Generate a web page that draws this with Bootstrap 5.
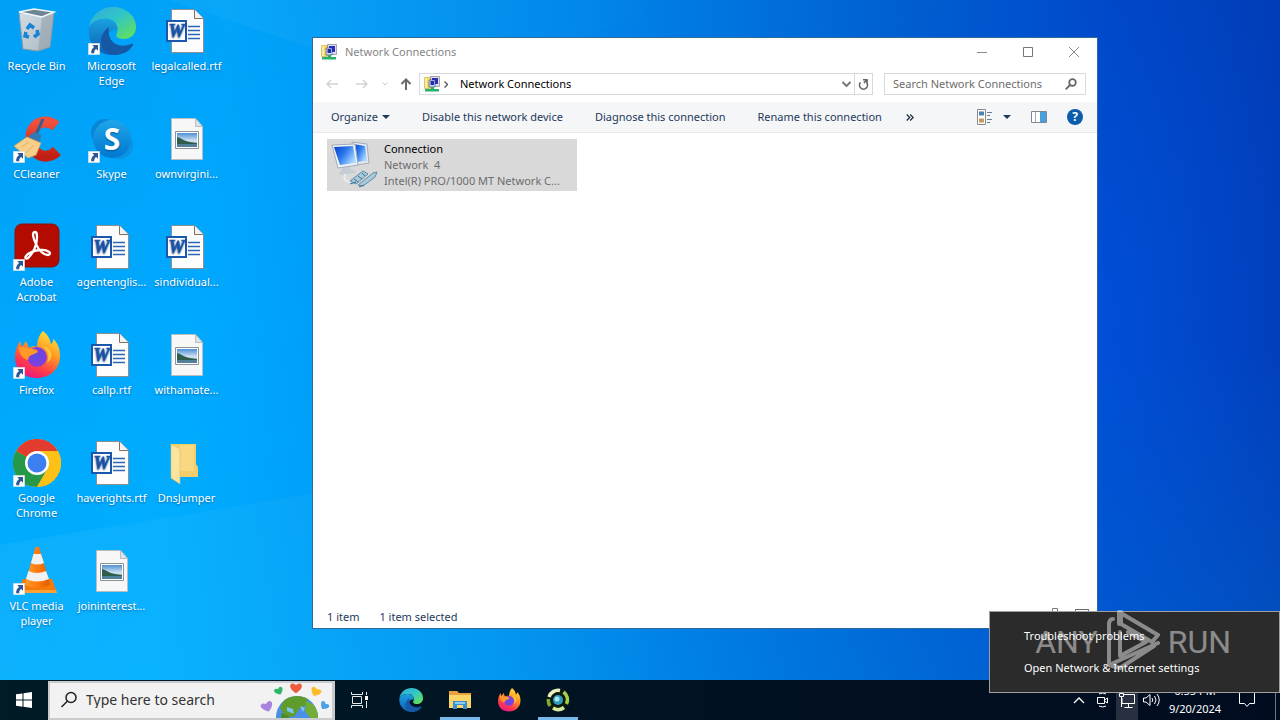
<!DOCTYPE html>
<html lang="en">
<head>
<meta charset="utf-8">
<meta name="viewport" content="width=device-width, initial-scale=1">
<title>Network Connections</title>
<link rel="stylesheet" href="https://cdn.jsdelivr.net/npm/bootstrap@5.3.0/dist/css/bootstrap.min.css">
<style>
body{font-family:"Noto Sans","Open Sans",sans-serif;font-size:11px;line-height:16px;color:#000;background:#0078d7}
button{font:inherit;color:inherit;border:0;background:none;padding:0}
button,a{display:inline-flex;align-items:center;justify-content:center}
svg{display:block;flex:none}
.desk{background:
 radial-gradient(ellipse 260px 420px at 1090px 330px,rgba(0,100,255,.35),transparent),
 linear-gradient(180deg,rgba(0,60,160,.06),transparent 50%,rgba(0,200,255,.18)),
 linear-gradient(97deg,#00a6fb 0%,#00aaff 17%,#008cef 42%,#0065d6 64%,#0046c6 82%,#0238b2 100%)}
.beams{position:absolute;inset:0;width:100%;height:100%}
.icon-grid{display:grid;grid-auto-flow:column;grid-template-rows:repeat(6,108px);grid-auto-columns:75px;position:relative;width:max-content;margin-left:-1px}
.desk-icon{flex-direction:column;justify-content:flex-start;align-items:center;gap:3px;padding-top:7px;color:#fff;text-decoration:none;text-align:center;line-height:15px;white-space:nowrap;text-shadow:0 1px 2px rgba(0,40,90,.5)}
.two-line{white-space:normal;width:62px}
.win{position:absolute;left:312px;right:182px;top:37px;bottom:51px;border:1px solid #2c6a9c;background:#fff}
.titlebar{height:28px;color:#858585}
.cap{width:46px;height:28px}
.navrow{height:36px;padding:0 11px 0 4px}
.w30{width:30px}.w26{width:26px}.w16{width:16px}
.addr,.find{height:22px;border:1px solid #d9d9d9}
.find{width:202px;margin-left:11px}
.find input{font-size:11px;color:#6d6d6d;border:0;outline:0;background:none;min-width:0}
.find input::placeholder,.tb-search input::placeholder{color:inherit;opacity:1}
.refresh{width:18px;border-left:1px solid #d9d9d9}
.tools{height:31px;background:#f5f6f7;border-bottom:1px solid #e9eaeb;color:#1e395b;padding:0 14px 0 18px;gap:32px}
.tools-right{gap:20px}
.view-pair{gap:10px}
.more-cmd{margin-left:-8px}
.conn{width:250px;height:52px;background:#d9d9d9;margin:6px 0 0 14px;color:#6d6d6d;text-align:left;justify-content:flex-start}
.conn-text{margin-left:5px}
.status{height:23px;color:#1e395b;padding:0 8px 0 14px}
.count{margin-right:20px}
.taskbar{height:40px;background:linear-gradient(90deg,#001a26,#021222 55%,#020c20)}
.tb-search{width:287px;height:39px;background:#f2f2f2;border:2px solid #c9cbcc;border-right-width:3px;color:#333}
.tb-search input{font-size:14px;border:0;outline:0;background:none;color:inherit;width:150px}
.task{width:48px;height:40px;margin-right:1px}
.running{position:relative}
.running::after{content:"";position:absolute;left:4px;right:4px;bottom:0;height:3px;background:#76b9ed}
.tray{width:24px;height:40px}
.clock{width:64px;line-height:18px;color:#fff}
.notif{width:40px;height:40px}
.pop{position:absolute;right:0;bottom:27px;width:291px;padding:8px 0;background:#2b2b2b;border:1px solid #a0a0a0;z-index:3}
.pop button{height:32px;padding-left:34px;color:#fff;justify-content:flex-start}
.wm{position:absolute;right:49px;bottom:46px;z-index:4;color:#fff;opacity:.45;pointer-events:none;font:32px/64px Roboto,sans-serif}
</style>
</head>
<body class="vh-100 d-flex flex-column overflow-hidden position-relative">
<svg width="0" height="0" class="position-absolute">
<defs>
<linearGradient id="eg" x1="0" y1="0" x2="1" y2="1"><stop offset="0" stop-color="#35a9d8"/><stop offset=".45" stop-color="#2fc5c9"/><stop offset="1" stop-color="#6be34c"/></linearGradient>
<linearGradient id="eb" x1="0" y1="0" x2="0" y2="1"><stop offset="0" stop-color="#1aa0e0"/><stop offset="1" stop-color="#0b5fb4"/></linearGradient>
<linearGradient id="fx" x1=".8" y1="0" x2=".3" y2="1"><stop offset="0" stop-color="#ffe63d"/><stop offset=".4" stop-color="#ff9a22"/><stop offset=".75" stop-color="#ff3a4a"/><stop offset="1" stop-color="#e8168a"/></linearGradient>
<radialGradient id="fp"><stop offset="0" stop-color="#5b4de8"/><stop offset="1" stop-color="#8a3bd8"/></radialGradient>
<linearGradient id="sk" x1="0" y1="0" x2="0" y2="1"><stop offset="0" stop-color="#1fa5ea"/><stop offset="1" stop-color="#0078d0"/></linearGradient>
<linearGradient id="cc" x1="0" y1="0" x2="0" y2="1"><stop offset="0" stop-color="#f0503c"/><stop offset="1" stop-color="#c21f14"/></linearGradient>
<linearGradient id="vl" x1="0" y1="0" x2="1" y2="0"><stop offset="0" stop-color="#ff9d2e"/><stop offset=".5" stop-color="#ff7a0c"/><stop offset="1" stop-color="#e05c00"/></linearGradient>
<linearGradient id="bn" x1="0" y1="0" x2="1" y2="1"><stop offset="0" stop-color="#d3dde5"/><stop offset="1" stop-color="#a9b6c1"/></linearGradient>
<linearGradient id="sky" x1="0" y1="0" x2="0" y2="1"><stop offset="0" stop-color="#4f8fd6"/><stop offset=".55" stop-color="#cfe4f2"/><stop offset="1" stop-color="#8fb3c8"/></linearGradient>
<linearGradient id="sc" x1="0" y1="0" x2="1" y2=".6"><stop offset="0" stop-color="#0a3bc8"/><stop offset=".5" stop-color="#2a78ee"/><stop offset="1" stop-color="#a8d8ff"/></linearGradient>
<linearGradient id="bm" x1="0" y1="0" x2="1" y2="0"><stop offset="0" stop-color="#fff" stop-opacity=".05"/><stop offset="1" stop-color="#fff" stop-opacity="0"/></linearGradient>
<symbol id="lnk" viewBox="0 0 12 12"><path fill="#fff" stroke="#cfd6dc" stroke-width=".6" d="M.3.3h11.4v11.4H.3z"/><path fill="#2b5797" d="M4.3 2h5.700v5.700L8.200 6C6.600 7 6.200 8.200 6.200 10.300H3.200C2.900 7.500 4 5.400 6.100 3.900z"/></symbol>
<symbol id="edge" viewBox="0 0 48 48"><path fill="url(#eg)" d="M1 20C3 8 13 0 25 0c13 0 23 9 23 20 0 8-6 12-12 12-7 0-9-3-7-6 2-4 0-13-9-14C12 11 4 14 1 20z"/><path fill="url(#eb)" d="M1 20c4-6 11-9 18-8 7 1 11 6 10 11-3-1-10 1-10 9 0 8 6 14 14 15C17 52-2 40 1 20z"/><path fill="#1559a6" d="M21 20c-6 4-10 12-7 20 4 7 12 9 19 7 5-1 9-4 12-9 0-1-1-2-2-1-11 5-25-1-22-17z"/></symbol>
<symbol id="ff" viewBox="0 0 48 48"><path fill="url(#fx)" d="M30 0c5 4 7 8 8 13 2-1 2-3 2-5 5 4 7 10 7 17 0 13-10 22-23 22S2 39 2 26c0-6 2-11 5-16l2 6 4-6 3 7c3-2 6-2 8-1 0-6 2-12 6-16z"/><circle cx="24" cy="26" r="10" fill="url(#fp)"/><path fill="#ff9a28" d="M6 16c6 0 11 2 15 2 4 1 6 3 0 5-4 1-6 3-6 6-5-1-9-6-9-13z"/><path fill="#ffc53a" d="M29 15c6 4 8 9 5 17 8-6 5-15-5-17z"/></symbol>
<symbol id="word" viewBox="3 0 48 48"><path fill="#fdfdfd" stroke="#8d8f92" d="M11.500 2.500h23l9 9v34h-32z"/><path fill="#f2f2f2" stroke="#7d7264" d="M34.500 2.500v9h9"/><path stroke="#2b66b8" stroke-width="1.300" d="M28 19.500h12M28 23.500h12M28 27.500h12M28 31.500h12"/><path fill="#fff" stroke="#1c57ae" stroke-width="2" d="M7 14h19v20H7z"/><text x="16.500" y="30" text-anchor="middle" font-family="Liberation Serif,serif" font-weight="700" font-style="italic" font-size="18" fill="#1c57ae" stroke="#1c57ae" stroke-width=".7">W</text></symbol>
<symbol id="pic" viewBox="0 0 48 48"><path fill="#f7f7f7" stroke="#b9bec2" d="M8.500 3.500h24l7 8v33h-31z"/><path fill="#dde3e7" stroke="#b9bec2" d="M32.500 3.500v8h7z"/><path fill="#fff" stroke="#8b9299" d="M12.500 16.500h23v17h-23z"/><path fill="url(#sky)" d="M14 18h20v14H14z"/><path fill="#2f5d4c" d="M14 22c4 1 7 4 13 5l7 1v1H14z"/><path fill="#537f9d" d="M14 29h20v3H14z"/></symbol>
<symbol id="netc" viewBox="0 0 16 16"><path fill="#f7dc56" stroke="#b79b2c" stroke-width=".5" d="M.5 1.500h6v11h-6z"/><path fill="#f9eda0" d="M1 2h2v10H1z"/><path fill="#dcdcee" stroke="#777" stroke-width=".6" d="M6.500.5h9v10h-9z"/><path fill="#2630b8" d="M8 2h6v6H8z"/><path fill="#d4d8f6" stroke="#33388c" stroke-width=".6" d="M5 4h6v7H5z"/><path fill="#2230a8" d="M6.500 5h3.500v4H6.500z"/><path fill="#25b36c" d="M7 11h3v2h5v2.500H1V13h6z"/></symbol>
<symbol id="dn" viewBox="0 0 8 4"><path fill="#1e395b" d="M0 0h8L4 4z"/></symbol>
</defs>
</svg>

<main class="desk flex-grow-1 position-relative">
 <svg class="beams" viewBox="0 0 1280 680" preserveAspectRatio="none"><path fill="url(#bm)" d="M170 0L420 85L700 0zM0 545L700 430V680H0z"/></svg>
 <nav class="icon-grid" aria-label="Desktop">
  <a href="#" class="desk-icon"><svg width="48" height="48" viewBox="0 0 48 48"><path fill="url(#bn)" stroke="#8a99a5" d="M6 6l35-1-4 35-12 4-15-2z"/><path fill="#8f9eaa" opacity=".55" d="M29 10l12-5-4 35-12 4z"/><path fill="#6d8495" stroke="#f2f7fa" stroke-width="1.500" d="M6 5l15-3 20 3-12 5z"/><g fill="none" stroke="#1583d6" stroke-width="3.500"><path d="M14 22l3-4 4 3M24 23l1 4-4 3M16 30l-4-1 1-4"/></g></svg><span>Recycle Bin</span></a>
  <a href="#" class="desk-icon"><svg width="48" height="48"><path fill="none" stroke="url(#cc)" stroke-width="11" d="M43 11C32 2 17 9 18 24c0 17 16 22 26 12"/><path stroke="#355f8c" stroke-width="3" d="M30 4L22 22"/><path fill="#2f79b5" d="M17 20l5-3 6 3-1 7-13-4z"/><path fill="#f7cf8a" stroke="#d9a458" stroke-width=".7" d="M14 22l14 6-5 12-8 3L1 31z"/><path stroke="#e8b060" d="M8 32l8-5M13 38l8-8"/><use href="#lnk" y="36" width="12" height="12"/></svg><span>CCleaner</span></a>
  <a href="#" class="desk-icon"><svg width="48" height="48"><rect x="2" y="1" width="44" height="43" rx="7" fill="#b30b00" stroke="#8c1208"/><path fill="none" stroke="#fff" stroke-width="2.300" d="M22 9c-4 0-1 8 1 12 3 7 8 11 12 11 5-1 0-6-8-5-5 0-12 3-14 6-2 2 1 4 3 1 4-4 8-12 8-19 0-4 0-6-2-6z"/><use href="#lnk" y="36" width="12" height="12"/></svg><span class="two-line">Adobe Acrobat</span></a>
  <a href="#" class="desk-icon"><svg width="48" height="48"><use href="#ff" width="48" height="48"/><use href="#lnk" y="36" width="12" height="12"/></svg><span>Firefox</span></a>
  <a href="#" class="desk-icon"><svg width="48" height="48"><circle cx="24" cy="24" r="24" fill="#fbc116"/><path fill="#e33b2e" d="M24 24L3.200 12A24 24 0 0 1 44.800 12z"/><path fill="#279847" d="M24 24L3.200 12A24 24 0 0 0 24 48l10.400-18z"/><path fill="#fbc116" d="M24 12h20.800A24 24 0 0 1 24 48l10.400-18z"/><circle cx="24" cy="24" r="12" fill="#fff"/><circle cx="24" cy="24" r="9.500" fill="#3d7ff0"/><use href="#lnk" y="36" width="12" height="12"/></svg><span class="two-line">Google Chrome</span></a>
  <a href="#" class="desk-icon"><svg width="48" height="48"><path fill="#f47b0a" d="M10 32h29l5 14H5z"/><path fill="url(#vl)" d="M22.500 0h3.500l11 37c-5 5-20 5-25 0z"/><path fill="#f1f1f1" d="M20.500 7h7.500l3 9q-7 3-13 0zM15.500 24q8 4 17.500 0l3 8q-12 5-23 0z"/><path fill="#ffb04a" d="M7 43h36l1 3H6z" opacity=".7"/><use href="#lnk" y="36" width="12" height="12"/></svg><span class="two-line">VLC media player</span></a>
  <a href="#" class="desk-icon"><svg width="48" height="48"><use href="#edge" width="48" height="48"/><use href="#lnk" y="36" width="12" height="12"/></svg><span class="two-line">Microsoft Edge</span></a>
  <a href="#" class="desk-icon"><svg width="48" height="48"><circle cx="17" cy="18" r="14" fill="#0a86d8"/><circle cx="31" cy="30" r="14" fill="#0b93df"/><circle cx="24" cy="24" r="19" fill="url(#sk)"/><text x="24" y="35" text-anchor="middle" font-family="Open Sans,sans-serif" font-size="30" font-weight="700" fill="#fff">S</text><use href="#lnk" y="36" width="12" height="12"/></svg><span>Skype</span></a>
  <a href="#" class="desk-icon"><svg width="48" height="48"><use href="#word" width="48" height="48"/></svg><span>agentenglis...</span></a>
  <a href="#" class="desk-icon"><svg width="48" height="48"><use href="#word" width="48" height="48"/></svg><span>callp.rtf</span></a>
  <a href="#" class="desk-icon"><svg width="48" height="48"><use href="#word" width="48" height="48"/></svg><span>haverights.rtf</span></a>
  <a href="#" class="desk-icon"><svg width="48" height="48"><use href="#pic" width="48" height="48"/></svg><span>joininterest...</span></a>
  <a href="#" class="desk-icon"><svg width="48" height="48"><use href="#word" width="48" height="48"/></svg><span>legalcalled.rtf</span></a>
  <a href="#" class="desk-icon"><svg width="48" height="48"><use href="#pic" width="48" height="48"/></svg><span>ownvirgini...</span></a>
  <a href="#" class="desk-icon"><svg width="48" height="48"><use href="#word" width="48" height="48"/></svg><span>sindividual...</span></a>
  <a href="#" class="desk-icon"><svg width="48" height="48"><use href="#pic" width="48" height="48"/></svg><span>withamate...</span></a>
  <a href="#" class="desk-icon"><svg width="48" height="48"><path fill="#f2cd6a" d="M8 5h25v20l2 3v10H8z"/><path fill="#fbe08f" d="M17 6h14v26H17z" opacity=".6"/><path fill="#fbe3a0" stroke="#e5bd59" stroke-width=".6" d="M8 5l9 5v35l-9-6z"/></svg><span>DnsJumper</span></a>
 </nav>

 <section class="win d-flex flex-column" aria-label="Network Connections">
  <header class="titlebar d-flex align-items-center">
   <svg class="ms-2" width="16" height="16"><use href="#netc"/></svg><span class="ms-1 ps-1 flex-grow-1">Network Connections</span>
   <button class="cap" aria-label="Minimize"><svg width="10" height="10"><path stroke="#8a8a8a" d="M0 5.500h10"/></svg></button>
   <button class="cap" aria-label="Maximize"><svg width="10" height="10"><path fill="none" stroke="#777" d="M.5.5h9v9h-9z"/></svg></button>
   <button class="cap" aria-label="Close"><svg width="10" height="10"><path stroke="#8a8a8a" d="M0 0l10 10M10 0L0 10"/></svg></button>
  </header>
  <div class="navrow d-flex align-items-center">
   <button class="w30" aria-label="Back"><svg width="12" height="10" fill="none" stroke="#d2d2d2" stroke-width="1.500"><path d="M12 5H1M5 1L1 5l4 4"/></svg></button>
   <button class="w30" aria-label="Forward"><svg width="12" height="10" fill="none" stroke="#d2d2d2" stroke-width="1.500"><path d="M0 5h11M7 1l4 4-4 4"/></svg></button>
   <button class="w16" aria-label="Recent locations"><svg width="6" height="4" fill="none" stroke="#c8c8c8"><path d="M.5.5L3 3 5.500.5"/></svg></button>
   <button class="w26" aria-label="Up"><svg width="12" height="12" fill="none" stroke="#6b6b6b" stroke-width="2"><path d="M6 12V1.500M1.500 6L6 1.500 10.500 6"/></svg></button>
   <div class="addr d-flex flex-grow-1 align-items-center">
    <svg class="ms-1 me-1" width="16" height="16"><use href="#netc"/></svg>
    <svg class="me-2" width="4" height="7" fill="none" stroke="#555" stroke-width="1.300"><path d="M.5.5l3 3-3 3"/></svg>
    <button class="ms-1">Network Connections</button>
    <button class="ms-auto w16" aria-label="Previous locations"><svg width="9" height="6" fill="none" stroke="#777" stroke-width="2"><path d="M.5 1l4 4 4-4"/></svg></button>
    <button class="refresh align-self-stretch" aria-label="Refresh"><svg width="11" height="12" fill="none" stroke="#666" stroke-width="1.600"><path d="M2.500 4.500a4 4 0 1 0 6 0M5 1.800h4v4M8.500 2L6 5"/></svg></button>
   </div>
   <label class="find d-flex align-items-center px-2"><input class="flex-grow-1 p-0" type="search" placeholder="Search Network Connections" aria-label="Search Network Connections"><svg width="12" height="12" fill="none" stroke="#666" stroke-width="1.800"><circle cx="7.500" cy="4.500" r="3.300"/><path d="M5 7L.7 11.300"/></svg></label>
  </div>
  <div class="tools d-flex align-items-center">
   <button class="gap-1">Organize<svg width="8" height="4"><use href="#dn"/></svg></button>
   <button>Disable this network device</button>
   <button>Diagnose this connection</button>
   <button>Rename this connection</button>
   <button class="more-cmd" aria-label="More commands"><svg width="8" height="7" fill="none" stroke="#1e2f45" stroke-width="1.300"><path d="M.7.5l3 3-3 3M4.200.5l3 3-3 3"/></svg></button>
   <div class="tools-right d-flex align-items-center ms-auto">
    <div class="view-pair d-flex align-items-center">
     <button aria-label="Change view"><svg width="16" height="16"><path fill="#fff" stroke="#8b8b8b" d="M.5.5h8v15h-8z"/><path fill="#4c84b8" d="M2 2.500h5v4H2z"/><path fill="#c49a58" d="M2 9.500h5v4H2z"/><path stroke="#6b7f90" d="M10 3.500h5M10 6.500h3M10 10.500h5M10 13.500h3"/></svg></button>
     <button aria-label="View options"><svg width="8" height="4"><use href="#dn"/></svg></button>
    </div>
    <button aria-label="Preview pane"><svg width="16" height="12"><path fill="#fff" stroke="#7c8894" d="M.5.5h15v11H.5z"/><path fill="#4aa0dc" d="M9 1h6v10H9z"/><path stroke="#9ab" d="M4.500 1v10"/></svg></button>
    <button aria-label="Help"><svg width="16" height="16"><circle cx="8" cy="8" r="8" fill="#0a5cad"/><text x="8" y="12" text-anchor="middle" font-size="12" font-weight="700" fill="#fff">?</text></svg></button>
   </div>
  </div>
  <div class="flex-grow-1">
   <button class="conn">
    <svg class="ms-1" width="48" height="48"><path fill="#e6ebf0" stroke="#a3adb8" d="M21 1l15 2 2 19-13 2z"/><path fill="url(#sc)" d="M22 3l12 2 2 15-11 1z"/><path fill="#c7cdd4" d="M10 25h9l1 4c5 0 6 2 4 3l-13 2c-4-1-4-3 0-5z"/><path fill="#f0f3f6" stroke="#a3adb8" d="M1 4l23-1 3 21-20 3z"/><path fill="url(#sc)" d="M3 6l19-1 3 17-16 2z"/><path fill="none" stroke="#e9edf0" stroke-width="2" d="M14 33c-2 6 2 9 8 7"/><path fill="#a9cadb" stroke="#5f8da6" d="M19 40l13-10 5 3-12 10zM27 44l15-12 4-1-2 5-12 9z"/><path stroke="#3f7390" d="M23 38l4 3M27 35l4 3M31 32l3 3M19 43l6-2M28 46l5-2"/></svg>
    <span class="conn-text d-block"><span class="d-block text-black">Connection</span><span class="d-block">Network &nbsp;4</span><span class="d-block">Intel(R) PRO/1000 MT Network C...</span></span>
   </button>
  </div>
  <footer class="status d-flex align-items-center"><span class="count">1 item</span><span>1 item selected</span>
   <button class="ms-auto me-3 align-self-start" aria-label="Details view"><svg width="8" height="8"><path fill="none" stroke="#777" d="M1.500 3.500h5v4h-5z"/></svg></button><button class="align-self-start" aria-label="Large icons view"><svg width="14" height="10"><path fill="none" stroke="#666" d="M.5 4.500h13v5H.5z"/></svg></button></footer>
 </section>
</main>

<footer class="taskbar d-flex align-items-center">
 <button class="task me-0" aria-label="Start"><svg width="16" height="16" fill="#fff"><path d="M0 2.300L6.500 1.400v6.200H0zM7.500 1.200L16 0v7.600H7.500zM0 8.500h6.500v6.200L0 13.800zM7.500 8.500H16V16l-8.500-1.200z"/></svg></button>
 <label class="tb-search d-flex align-items-center ps-2 overflow-hidden"><svg class="me-2" width="20" height="18" fill="none" stroke="#222" stroke-width="1.500"><circle cx="13" cy="6.500" r="5"/><path d="M9.300 10.200L3.500 16"/></svg><input class="p-0" type="search" placeholder="Type here to search" aria-label="Type here to search">
  <svg class="ms-auto" width="72" height="36" viewBox="0 0 72 36"><defs><clipPath id="gl"><circle cx="37" cy="35" r="21"/></clipPath><path id="ht" d="M0 4C-6-2-13 6 0 14 13 6 6-2 0 4z"/></defs><circle cx="37" cy="35" r="21" fill="#4a8fe8"/><g clip-path="url(#gl)"><path fill="#5f9c2c" d="M24 18c6-6 16-7 24-2l-2 7-7 4-5 8-9-1-5-8z"/><path fill="#73ad35" d="M46 19l8 4 6 12-8 3-7-9z"/><path fill="#81c3f3" d="M27 25l6 2 1 5-7-3zM40 24l5 2-2 4z"/><path fill="#4f8a2a" d="M21 31l8 3v5h-8z"/></g><use href="#ht" fill="#ee5a3c" transform="translate(36 0) scale(.8)"/><use href="#ht" fill="#30b566" transform="translate(17 5) rotate(-25) scale(.6)"/><use href="#ht" fill="#fbbc2c" transform="translate(58 5) rotate(25) scale(.7)"/><use href="#ht" fill="#a983dc" transform="translate(5 19) rotate(-20) scale(.8)"/><use href="#ht" fill="#4aa3ea" transform="translate(67 20) rotate(35) scale(.6)"/></svg>
 </label>
 <button class="task me-1" aria-label="Task view"><svg width="18" height="16" fill="none" stroke="#e8e8e8"><path d="M2.500 4.500h9v7h-9zM1.500 0v2.500h11V0M1.500 16v-2.500h11V16"/><path d="M16.500 0v3M16.500 9v7"/><path fill="#fff" stroke="none" d="M15 4h3v4h-3z"/></svg></button>
 <button class="task" aria-label="Microsoft Edge"><svg width="24" height="24"><use href="#edge"/></svg></button>
 <button class="task running" aria-label="File Explorer"><svg width="22" height="20"><path fill="#e9a23b" d="M0 1h8l2 2h12v5H0z"/><path fill="#fcd468" d="M0 5h22v13H0z"/><path fill="#3c8fd0" d="M4 11h14v8h-4v-4H8v4H4z"/><path fill="#8ecbf3" d="M6 12h10v2H6z"/></svg></button>
 <button class="task" aria-label="Firefox"><svg width="24" height="24"><use href="#ff"/></svg></button>
 <button class="task running" aria-label="DNS Jumper"><svg width="24" height="24"><circle cx="12" cy="12" r="11" fill="#0c1a10"/><circle cx="12" cy="12" r="5" fill="#2f9ac0"/><circle cx="11" cy="11" r="2.500" fill="#a5e8f0"/><g fill="none" stroke-width="3.500"><path stroke="#e8f0c0" d="M3 9a9.500 9.500 0 0 1 11-6.500"/><path stroke="#a6cf45" d="M17.500 4a9.500 9.500 0 0 1 3 12"/><path stroke="#d8e89a" d="M18 19.500a9.500 9.500 0 0 1-11 .5"/><path stroke="#7fae2e" d="M4 18a9.500 9.500 0 0 1-1.500-7"/></g></svg></button>
 <div class="ms-auto d-flex align-items-center text-white">
  <button class="tray" aria-label="Show hidden icons"><svg width="12" height="8" fill="none" stroke="#fff" stroke-width="1.300"><path d="M1 7l5-5 5 5"/></svg></button>
  <button class="tray" aria-label="Meet now"><svg width="12" height="16" fill="none" stroke="#fff"><path d="M.5 5.500h7v6h-7zM7.500 8l3-2v5l-3-2M2 2q4-2 7 0M2 14q4 2 7 0"/></svg></button>
  <button class="tray" aria-label="Network"><svg width="22" height="40" fill="none" stroke="#fff"><path fill="#26303f" stroke="none" d="M0 0h22v40H0z"/><path d="M8 14.500h10.500v9H6V18M12.500 23v4M8.500 27.500h8M3.500 13.500h4v3h-4zM5.500 17v10"/></svg></button>
  <button class="tray" aria-label="Volume"><svg width="17" height="14" fill="none" stroke="#fff"><path d="M.5 5v4h2.500l4 3.500v-11L3 5zM9 5q1.500 2 0 4M11.500 3q3 4 0 8M14 1q4.500 6 0 12"/></svg></button>
  <button class="clock flex-column"><span>6:55 PM</span><span>9/20/2024</span></button>
  <button class="notif me-2" aria-label="Notifications"><svg width="16" height="16" fill="none" stroke="#fff"><path d="M.5.5h15v11h-5L8 14.500l-2.500-3h-5z"/></svg></button>
  <button class="border-start border-secondary" aria-label="Show desktop"><svg width="4" height="40"></svg></button>
 </div>
</footer>

<div class="pop d-flex flex-column" role="menu">
 <button role="menuitem">Troubleshoot problems</button>
 <button role="menuitem">Open Network &amp; Internet settings</button>
</div>
<div class="wm d-flex align-items-center gap-2"><span>ANY</span><svg width="54" height="64" fill="none" stroke="#fff" stroke-width="4" stroke-linejoin="round" stroke-linecap="round"><path d="M7 9Q3 9 3 15V55M13 14V2L52 25L46 32L15 14V2M3 55L52 33M3 55L14 58L48 36M14 22V46L40 32L22 22"/></svg><span>RUN</span></div>
<script src="https://cdn.jsdelivr.net/npm/bootstrap@5.3.0/dist/js/bootstrap.bundle.min.js"></script>
</body>
</html>
